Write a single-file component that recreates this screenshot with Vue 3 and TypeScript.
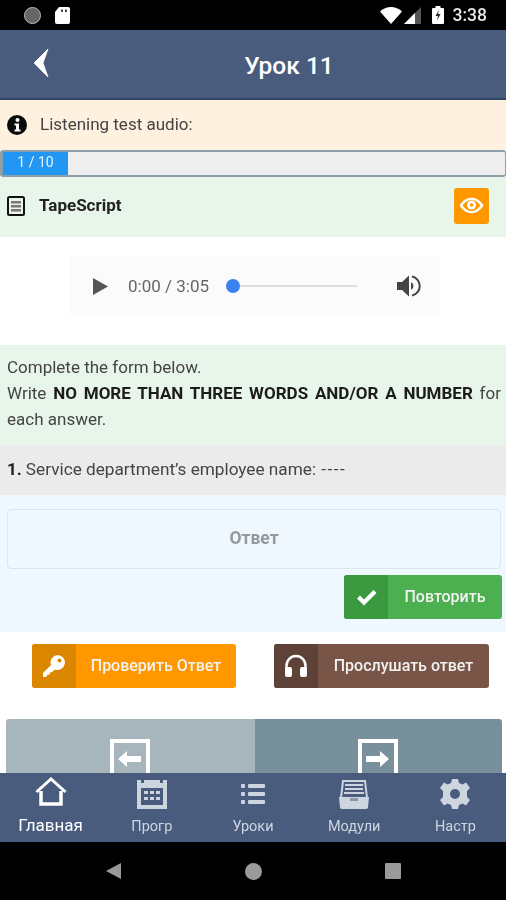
<script setup lang="ts">
interface Tab { label: string; key: string }
const tabs: Tab[] = [
  { label: 'Главная', key: 'home' },
  { label: 'Прогр', key: 'cal' },
  { label: 'Уроки', key: 'list' },
  { label: 'Модули', key: 'box' },
  { label: 'Настр', key: 'gear' },
]
</script>

<template>
  <div class="phone">
    <div class="status">
      <div class="status-left">
        <span class="rec"></span>
        <svg width="15" height="17" viewBox="0 0 15 17"><path d="M4 0h9a2 2 0 0 1 2 2v13a2 2 0 0 1-2 2H2a2 2 0 0 1-2-2V5z" fill="#fff"/><rect x="6" y="2.500" width="2" height="2.500" fill="#444"/><rect x="10" y="2.500" width="2" height="2.500" fill="#444"/></svg>
      </div>
      <div class="status-right">
        <svg class="wifi" width="22" height="17" viewBox="0 0 22 17"><path d="M0 4.500C3 1.500 7 0 11 0s8 1.500 11 4.500L11 17z" fill="#fff"/></svg>
        <svg class="signal" width="17" height="17" viewBox="0 0 17 17"><path d="M17 0v17H0z" fill="#555"/><path d="M11 6v11H0z" fill="#fff"/></svg>
        <svg class="batt" width="12" height="18" viewBox="0 0 12 18"><path d="M3.500 0h5v2H11a1 1 0 0 1 1 1v14a1 1 0 0 1-1 1H1a1 1 0 0 1-1-1V3a1 1 0 0 1 1-1h2.500z" fill="#fff"/><path d="M7 4 3.500 10H6l-1 4.500L8.500 8H6z" fill="#222"/></svg>
        <span class="clock">3:38</span>
      </div>
    </div>

    <header class="topbar">
      <svg class="back" width="16" height="30" viewBox="0 0 16 30"><path d="M15 1 1 15l14 14-5-14z" fill="#fff" stroke="#fff" stroke-width=".8" stroke-linejoin="round"/></svg>
      <h1>Урок 11</h1>
    </header>

    <main class="content">
      <div class="notice">
        <svg width="20" height="20" viewBox="0 0 20 20"><circle cx="10" cy="10" r="10" fill="#0b0b0b"/><circle cx="10.500" cy="5" r="2" fill="#fff"/><path d="M7.500 8.500h4.500v6h1.500v2H7.500v-2H9v-4H7.500z" fill="#fff"/></svg>
        <span>Listening test audio:</span>
      </div>

      <div class="progress">
        <div class="progress-fill">1 / 10</div>
      </div>

      <div class="tape">
        <svg width="18" height="20" viewBox="0 0 18 20"><rect x="1" y="1" width="16" height="18" rx="1.500" fill="none" stroke="#111" stroke-width="2"/><rect x="4" y="5" width="10" height="2.500" fill="#777"/><rect x="4" y="9" width="10" height="2.500" fill="#777"/><rect x="4" y="13" width="10" height="2.500" fill="#777"/></svg>
        <strong>TapeScript</strong>
        <button class="eye">
          <svg width="25" height="17" viewBox="0 0 25 17"><path d="M.5 8.500C4 3 8 .8 12.500.8S21 3 24.500 8.500C21 14 17 16.200 12.500 16.200S4 14 .5 8.500z" fill="#fff"/><path d="M3.500 8.500C6 5 9 3 12.500 3s6.500 2 9 5.500c-2.500 3.500-5.500 5.500-9 5.500s-6.500-2-9-5.500z" fill="#ff9800"/><circle cx="12.500" cy="8" r="4.500" fill="#fff"/><circle cx="12.500" cy="8" r="1.800" fill="#ff9800"/></svg>
        </button>
      </div>

      <div class="audio-wrap">
        <div class="player">
          <svg width="15" height="17" viewBox="0 0 15 17"><path d="M0 0v17l15-8.500z" fill="#555"/></svg>
          <span class="time">0:00 / 3:05</span>
          <div class="seek"><span class="knob"></span></div>
          <svg class="vol" width="24" height="24" viewBox="0 0 24 24"><path d="M0 8h5l7-6.500v21L5 16H0z" fill="#444"/><path d="M14 8a4.500 4.500 0 0 1 0 8z" fill="#444"/><path d="M15 2.500a9.700 9.700 0 0 1 0 19" fill="none" stroke="#444" stroke-width="2"/></svg>
        </div>
      </div>

      <div class="instructions">
        Complete the form below.<br />
        Write <b>NO MORE THAN THREE WORDS AND/OR A NUMBER</b> for each answer.
      </div>

      <div class="question"><b>1.</b> <span>Service department’s employee name: <span class="dashes">----</span></span></div>

      <div class="answer">
        <div class="input">Ответ</div>
        <div class="repeat-row">
          <button class="ibtn green">
            <span class="ico">
              <svg width="21" height="17" viewBox="0 0 21 17"><path d="M1 9.500 4 6.500l4 4L17.500 1 20.500 4 8 16.500z" fill="#fff"/></svg>
            </span>
            <span class="lbl">Повторить</span>
          </button>
        </div>
      </div>

      <div class="actions">
        <button class="ibtn orange">
          <span class="ico">
            <svg width="22" height="23" viewBox="0 0 22 23"><path d="M14.500 0a7.500 7.500 0 1 1-2.800 14.500L9 17.200H7v2.300H5L3 22H0v-4l8-8A7.500 7.500 0 0 1 14.500 0z" fill="#fff"/><circle cx="16.500" cy="5.500" r="2" fill="#db8600"/></svg>
          </span>
          <span class="lbl">Проверить Ответ</span>
        </button>
        <button class="ibtn brown">
          <span class="ico">
            <svg width="24" height="24" viewBox="0 0 24 24"><path d="M2.500 15v-3.500a9.500 9.500 0 0 1 19 0V15" fill="none" stroke="#fff" stroke-width="2.500"/><rect x="1" y="13" width="7" height="10" rx="2" fill="#fff"/><rect x="16" y="13" width="7" height="10" rx="2" fill="#fff"/></svg>
          </span>
          <span class="lbl">Прослушать ответ</span>
        </button>
      </div>

      <div class="pager">
        <div class="page prev">
          <svg width="40" height="40" viewBox="0 0 40 40"><path d="M2 40V2h36v38" fill="none" stroke="#fff" stroke-width="4"/><path d="M8 20l9-8v5h14v6H17v5z" fill="#fff"/></svg>
        </div>
        <div class="page next">
          <svg width="40" height="40" viewBox="0 0 40 40"><path d="M2 40V2h36v38" fill="none" stroke="#fff" stroke-width="4"/><path d="M31 20l-9-8v5H8v6h14v5z" fill="#fff"/></svg>
        </div>
      </div>
    </main>

    <nav class="tabs">
      <div v-for="(t, i) in tabs" :key="t.key" class="tab" :class="{ active: i === 0 }">
        <svg v-if="t.key === 'home'" width="32" height="30" viewBox="0 0 32 30"><path d="M1.500 15 16 2l14.500 13" fill="none" stroke="#fff" stroke-width="3"/><path d="M6 14v13h20V14M6 27h20" fill="none" stroke="#fff" stroke-width="3.500"/></svg>
        <svg v-else-if="t.key === 'cal'" class="ic-cal" width="30" height="30" viewBox="0 0 30 30"><path d="M0 1h4v3h3V1h16v3h3V1h4v29H0z" fill="#cdd5df"/><rect x="4" y="9" width="22" height="17" fill="#4a5c7e"/><g fill="#cdd5df"><rect x="7" y="12" width="4" height="3"/><rect x="13" y="12" width="4" height="3"/><rect x="19" y="12" width="4" height="3"/><rect x="7" y="18" width="4" height="3"/><rect x="13" y="18" width="4" height="3"/><rect x="19" y="18" width="4" height="3"/></g></svg>
        <svg v-else-if="t.key === 'list'" class="ic-list" width="24" height="20" viewBox="0 0 24 20"><g fill="#cdd5df"><rect x="0" y="0" width="4" height="4" rx="1"/><rect x="7" y="0" width="17" height="4" rx="1"/><rect x="0" y="8" width="4" height="4" rx="1"/><rect x="7" y="8" width="17" height="4" rx="1"/><rect x="0" y="16" width="4" height="4" rx="1"/><rect x="7" y="16" width="17" height="4" rx="1"/></g></svg>
        <svg v-else-if="t.key === 'box'" class="ic-cal" width="30" height="30" viewBox="0 0 30 30"><path d="M4 2h22l2 17H2z" fill="none" stroke="#cdd5df" stroke-width="2"/><g stroke="#cdd5df" stroke-width="2"><path d="M6 6h18M6 10h18M5 14h20"/></g><path d="M0 18h30l-1 10a2 2 0 0 1-2 2H3a2 2 0 0 1-2-2z" fill="#cdd5df"/><rect x="11" y="19" width="8" height="3" fill="#8795a9"/></svg>
        <svg v-else class="ic-cal" width="30" height="30" viewBox="0 0 30 30"><path d="M12 0h6l1 4 3.500 1.500L26 3.500 30 9l-3 3v6l3 3-4 5.500-3.500-2L19 26l-1 4h-6l-1-4-3.500-1.500-3.500 2L0 21l3-3v-6L0 9l4-5.500 3.500 2L11 4z" fill="#cdd5df"/><circle cx="15" cy="15" r="5" fill="#4a5c7e"/></svg>
        <span>{{ t.label }}</span>
      </div>
    </nav>

    <div class="sysnav">
      <span class="tri"></span>
      <span class="dot"></span>
      <span class="sq"></span>
    </div>
  </div>
</template>

<style>
html, body { margin: 0; background: #fff; }
</style>

<style scoped>
.phone {
  width: 506px;
  height: 900px;
  display: flex;
  flex-direction: column;
  overflow: hidden;
  font-family: Roboto, "Liberation Sans", sans-serif;
  color: #333;
  filter: blur(0.55px);
}
.status {
  height: 30px;
  flex: none;
  background: #000;
  display: flex;
  align-items: center;
  justify-content: space-between;
  padding: 0 19px 0 24px;
}
.status-left, .status-right { display: flex; align-items: center; }
.status-left { gap: 14px; }
.rec { width: 17px; height: 17px; border-radius: 50%; background: #666; border: 1px solid #bbb; box-sizing: border-box; }
.signal { margin-left: 2px; }
.batt { margin-left: 11px; }
.clock { margin-left: 9px; color: #e8e8e8; font-size: 17.500px; font-weight: 500; }
.topbar {
  height: 68px;
  flex: none;
  background: #4a5c7e;
  border-bottom: 2px solid #2d4668;
  display: flex;
  align-items: center;
  justify-content: center;
  position: relative;
  box-sizing: content-box;
  padding-left: 72px;
}
.back { position: absolute; left: 33px; top: 18px; }
.topbar h1 { margin: 3px 0 0; font-size: 24.500px; font-weight: 500; color: #fff; }
.content { flex: 1; min-height: 0; overflow: hidden; }
.notice {
  height: 50px;
  background: #fff1e0;
  display: flex;
  align-items: center;
  gap: 13px;
  padding-left: 7px;
  font-size: 17px;
  color: #444;
}
.notice span { margin-bottom: 2px; }
.progress {
  height: 27px;
  box-sizing: border-box;
  background: #eeeeee;
  border: 2px solid #8d9fa9;
  border-left-width: 3px;
  border-right-width: 1px;
  border-radius: 3px;
}
.progress-fill {
  width: 65px;
  height: 100%;
  background: #2196f3;
  color: #e8f3fd;
  font-size: 14px;
  line-height: 21px;
  text-align: center;
}
.tape {
  height: 60px;
  background: #e8f5ea;
  display: flex;
  align-items: center;
  padding: 0 17px 0 7px;
  gap: 14px;
}
.tape strong { flex: 1; font-size: 17px; font-weight: 700; color: #222; margin-bottom: 4px; }
.tape > svg { margin-bottom: 3px; }
.eye {
  width: 35px;
  height: 36px;
  padding: 0;
  border: 0;
  border-radius: 3px;
  background: #ff9800;
  display: flex;
  align-items: center;
  justify-content: center;
  margin-bottom: 3px;
}
.audio-wrap {
  height: 108px;
  display: flex;
  justify-content: center;
  align-items: flex-start;
  padding: 19px 0 0 4px;
  box-sizing: border-box;
}
.player {
  width: 370px;
  height: 60px;
  box-sizing: border-box;
  background: #fbfbfb;
  display: flex;
  align-items: center;
  padding: 0 19px 0 23px;
}
.time { margin-left: 20px; font-size: 17px; color: #666; white-space: nowrap; }
.seek {
  margin-left: 18px;
  width: 130px;
  height: 2px;
  background: #ddd;
  position: relative;
}
.knob {
  position: absolute;
  left: -1px;
  top: -6px;
  width: 14px;
  height: 14px;
  border-radius: 50%;
  background: #3b82f0;
}
.vol { margin-left: auto; }
.instructions {
  height: 100px;
  box-sizing: border-box;
  background: #e8f5ea;
  padding: 9px 5px 0 7px;
  font-size: 17px;
  line-height: 26px;
  color: #444;
  text-align: justify;
}
.instructions b { color: #1c1c1c; font-weight: 700; }
.question {
  height: 50px;
  box-sizing: border-box;
  padding: 0 0 3px 7px;
  background: #ebebeb;
  display: flex;
  align-items: center;
  gap: 4px;
  font-size: 17.200px;
  color: #444;
}
.question b { color: #222; }
.dashes { letter-spacing: 1.500px; margin-left: 1px; }
.answer {
  height: 137px;
  box-sizing: border-box;
  background: #f0f8ff;
  padding: 14px 4px 0 7px;
}
.input {
  height: 60px;
  box-sizing: border-box;
  margin-right: 1px;
  border: 1px solid #dbe5ec;
  border-radius: 4px;
  font-size: 17.500px;
  font-weight: 700;
  color: #96999c;
  display: flex;
  align-items: center;
  justify-content: center;
  padding-bottom: 3px;
}
.repeat-row { display: flex; justify-content: flex-end; margin-top: 6px; }
.ibtn {
  height: 44px;
  padding: 0 0 2px;
  border: 0;
  border-radius: 3px;
  display: flex;
  align-items: stretch;
  color: #fff;
  font-family: inherit;
  font-size: 16px;
  font-weight: 500;
  overflow: hidden;
}
.ibtn .ico { margin-bottom: -2px; }
.ico { width: 44px; flex: none; display: flex; align-items: center; justify-content: center; }
.lbl { flex: 1; display: flex; align-items: center; justify-content: center; white-space: nowrap; color: #f2f2f2; }
.green { width: 158px; background: #4caf50; }
.green .ico { background: #3b9a40; }
.orange { width: 204px; background: #ff9800; }
.orange .ico { background: #db8600; }
.brown { width: 215px; background: #795548; color: #fff; }
.brown .ico { background: #5f4237; }
.actions {
  height: 87px;
  box-sizing: border-box;
  padding: 12px 17px 0 32px;
  display: flex;
  justify-content: space-between;
}
.pager {
  margin: 0 4px 0 6px;
  height: 90px;
  display: flex;
  border-radius: 3px 3px 0 0;
  overflow: hidden;
}
.page { box-sizing: border-box; flex: 1; display: flex; justify-content: center; align-items: flex-start; padding: 20px 1px 0 0; }
.prev { background: #a6b6bc; }
.next { background: #78909c; flex: 0 0 247px; }
.tabs {
  height: 69px;
  flex: none;
  background: #4a5c7e;
  display: flex;
}
.tab {
  flex: 1;
  position: relative;
  display: flex;
  flex-direction: column;
  align-items: center;
  justify-content: flex-end;
  padding-bottom: 7px;
  color: #cdd5df;
  font-size: 14.500px;
  overflow: hidden;
}
.tab svg { position: absolute; left: 50%; top: 4px; transform: translateX(-50%); }
.tab svg.ic-cal { top: 6px; }
.tab svg.ic-list { top: 11px; }
.tab.active { color: #fff; font-size: 17px; }
.sysnav {
  height: 58px;
  flex: none;
  background: #000;
  display: flex;
  align-items: center;
  justify-content: space-between;
  padding: 0 105px 0 106px;
}
.tri { width: 0; height: 0; border-style: solid; border-width: 8.500px 15px 8.500px 0; border-color: transparent #9a9a9a transparent transparent; }
.dot { width: 17px; height: 17px; border-radius: 50%; background: #9a9a9a; }
.sq { width: 16px; height: 16px; border-radius: 1px; background: #9a9a9a; }
</style>
